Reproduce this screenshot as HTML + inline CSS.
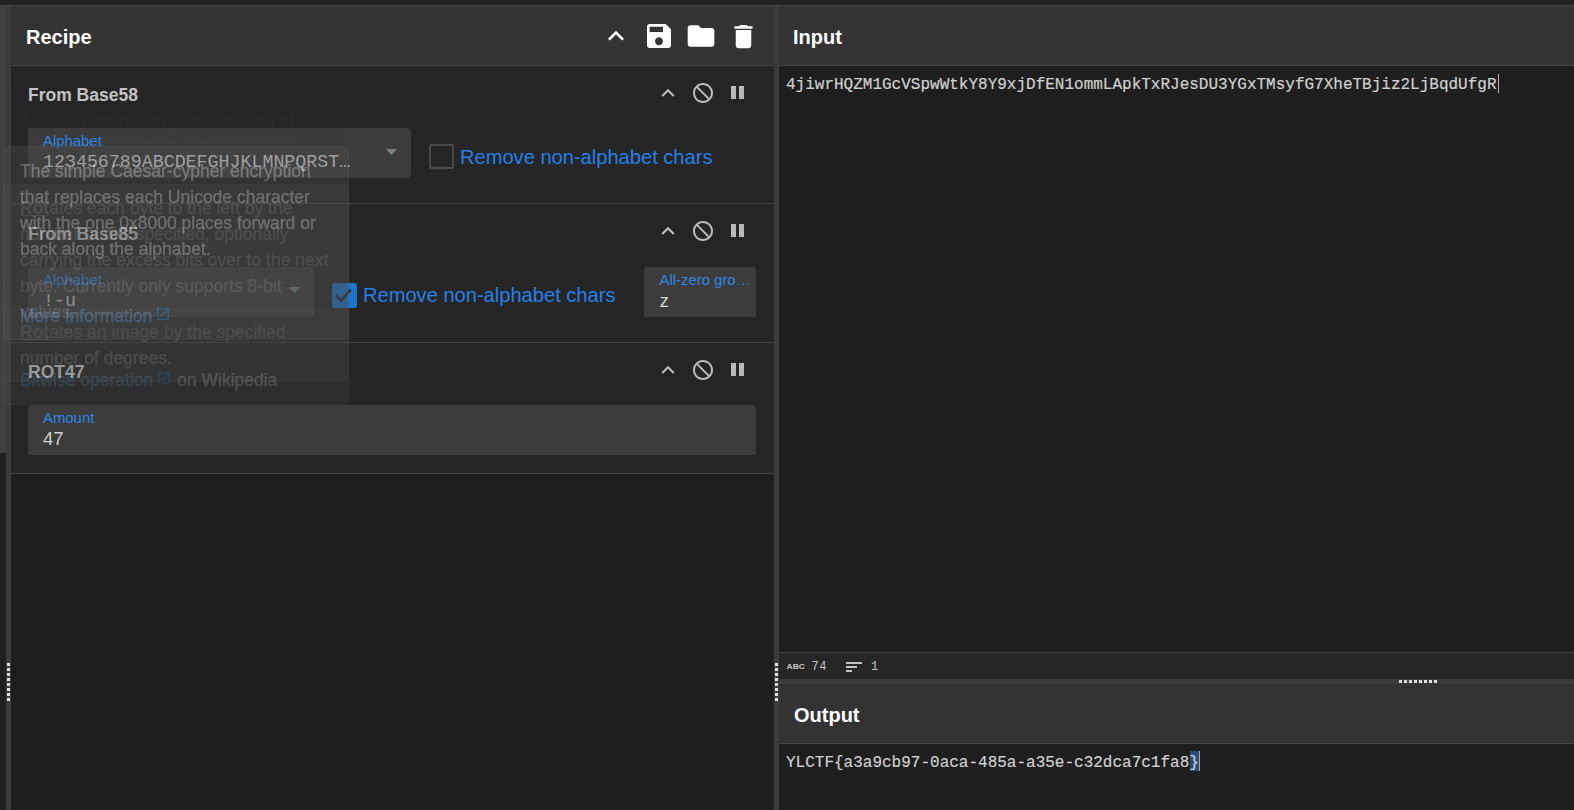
<!DOCTYPE html>
<html><head><meta charset="utf-8">
<style>
*{box-sizing:border-box;margin:0;padding:0}
html,body{width:1574px;height:810px;overflow:hidden;background:#1e1e1e;font-family:"Liberation Sans",sans-serif}
.a{position:absolute}
.hdr{background:#333;border-bottom:1px solid #444}
.title{color:#fff;font-weight:bold;font-size:20px;line-height:20px;white-space:nowrap}
.opt{color:#c5c5c5;font-weight:bold;font-size:17.5px;line-height:18px;white-space:nowrap}
.arg{background:#3c3c3c;border-radius:4px 4px 0 0}
.lbl{color:#2f86e6;font-size:14.9px;line-height:15px;white-space:nowrap}
.mono{font-family:"Liberation Mono",monospace}
.cbl{color:#2680ea;font-size:20.1px;line-height:20px;white-space:nowrap}
.val{color:#d0d0d0;white-space:nowrap}

.pop{will-change:transform;position:absolute;left:3px;width:346px;background:#4e4e4e;border:1px solid #626262;border-radius:6px}
.pl{position:absolute;left:16px;color:#e6e6e6;-webkit-text-stroke:0.25px #e6e6e6;font-size:17.5px;line-height:20px;white-space:nowrap}
.pl b{font-weight:bold}
.pk{color:#3aa2ff}
.ext{display:inline-block;vertical-align:baseline}
</style></head><body>
<!-- top strip -->
<div class="a" style="left:0;top:0;width:1574px;height:5px;background:#232323"></div>
<div class="a" style="left:0;top:5px;width:1574px;height:1px;background:#454545"></div>
<!-- left ops panel sliver -->
<div class="a" style="left:0;top:6px;width:6px;height:447px;background:#404040"></div>
<div class="a" style="left:0;top:453px;width:6px;height:357px;background:#1f1f1f"></div>
<!-- gutter left -->
<div class="a" style="left:6px;top:6px;width:5px;height:804px;background:#3c3c3c"></div>
<!-- recipe panel -->
<div class="a" style="left:11px;top:6px;width:763px;height:804px;background:#1e1e1e"></div>
<div class="a hdr" style="left:11px;top:6px;width:763px;height:60px"></div>
<div class="a title" style="left:26px;top:27px">Recipe</div>

<!-- op 1 -->
<div class="a" style="left:11px;top:66px;width:763px;height:138px;background:#252525;border-bottom:1px solid #444"></div>
<div class="a opt" style="left:28px;top:86px">From Base58</div>
<div class="a arg" style="left:28px;top:128px;width:383px;height:50px;border-radius:0 4px 4px 0"></div>
<div class="a lbl" style="left:43px;top:133.7px">Alphabet</div>
<div class="a val mono" style="left:43px;top:153px;font-size:18.3px;line-height:18px">123456789ABCDEFGHJKLMNPQRST…</div>
<div class="a cb" style="left:429px;top:144px;width:25px;height:25px;border:2px solid #4a4a4a;border-radius:2px"></div>
<div class="a cbl" style="left:460px;top:147px">Remove non-alphabet chars</div>

<!-- op 2 -->
<div class="a" style="left:11px;top:204px;width:763px;height:139px;background:#252525;border-bottom:1px solid #444"></div>
<div class="a opt" style="left:28px;top:225px">From Base85</div>
<div class="a arg" style="left:28px;top:267px;width:286px;height:50px;border-radius:0 4px 4px 0"></div>
<div class="a lbl" style="left:43px;top:272.7px">Alphabet</div>
<div class="a val mono" style="left:43px;top:292.3px;font-size:18.3px;line-height:18px">!-u</div>
<div class="a" style="left:332px;top:283px;width:25px;height:25px;background:#1b74d0;border-radius:3px"></div>
<div class="a cbl" style="left:363px;top:285px">Remove non-alphabet chars</div>
<div class="a arg" style="left:644px;top:267px;width:112px;height:50px"></div>
<div class="a lbl" style="left:659.5px;top:273px">All-zero gro…</div>
<div class="a val" style="left:659.5px;top:291.5px;font-size:19px;line-height:18px">z</div>

<!-- op 3 -->
<div class="a" style="left:11px;top:343px;width:763px;height:131px;background:#252525;border-bottom:1px solid #444"></div>
<div class="a opt" style="left:28px;top:362.5px">ROT47</div>
<div class="a arg" style="left:28px;top:405px;width:728px;height:50px"></div>
<div class="a lbl" style="left:43px;top:410.7px">Amount</div>
<div class="a val" style="left:43px;top:430px;font-size:18.5px;line-height:18px">47</div>


<!-- header icons -->
<svg class="a" style="left:600px;top:20px" width="32" height="32" viewBox="0 0 24 24"><path fill="#fff" d="M7.41 15.41L12 10.83l4.59 4.58L18 14l-6-6-6 6z"/></svg>
<svg class="a" style="left:643px;top:20.3px" width="32" height="32" viewBox="0 0 24 24"><path fill="#fff" d="M17 3H5c-1.11 0-2 .9-2 2v14c0 1.1.89 2 2 2h14c1.1 0 2-.9 2-2V7l-4-4zm-5 16c-1.66 0-3-1.34-3-3s1.34-3 3-3 3 1.34 3 3-1.34 3-3 3zm3-10H5V5h10v4z"/></svg>
<svg class="a" style="left:685.2px;top:20.3px" width="32" height="32" viewBox="0 0 24 24"><path fill="#fff" d="M10 4H4c-1.1 0-1.99.9-1.99 2L2 18c0 1.1.9 2 2 2h16c1.1 0 2-.9 2-2V8c0-1.1-.9-2-2-2h-8l-2-2z"/></svg>
<svg class="a" style="left:728.2px;top:20.7px" width="31" height="31" viewBox="0 0 24 24"><path fill="#fff" d="M6 19c0 1.1.9 2 2 2h8c1.1 0 2-.9 2-2V7H6v12zM19 4h-3.5l-1-1h-5l-1 1H5v2h14V4z"/></svg>
<svg class="a" style="left:654.5px;top:79.8px" width="26" height="26" viewBox="0 0 24 24"><path fill="#bdbdbd" d="M7.41 15.41L12 10.83l4.59 4.58L18 14l-6-6-6 6z"/></svg>
<svg class="a" style="left:690.6px;top:80.8px;transform:scaleX(-1)" width="24" height="24" viewBox="0 0 24 24"><path fill="#bdbdbd" d="M12 2C6.48 2 2 6.48 2 12s4.48 10 10 10 10-4.48 10-10S17.52 2 12 2zM4 12c0-4.42 3.58-8 8-8 1.85 0 3.55.63 4.9 1.69L5.69 16.9C4.63 15.55 4 13.85 4 12zm8 8c-1.85 0-3.55-.63-4.9-1.69L18.31 7.1C19.37 8.45 20 10.15 20 12c0 4.42-3.58 8-8 8z"/></svg>
<div class="a" style="left:731.3px;top:86px;width:4.6px;height:13px;background:#b8b8b8"></div>
<div class="a" style="left:739.3px;top:86px;width:4.6px;height:13px;background:#b8b8b8"></div>
<svg class="a" style="left:654.5px;top:218.3px" width="26" height="26" viewBox="0 0 24 24"><path fill="#bdbdbd" d="M7.41 15.41L12 10.83l4.59 4.58L18 14l-6-6-6 6z"/></svg>
<svg class="a" style="left:690.6px;top:219.3px;transform:scaleX(-1)" width="24" height="24" viewBox="0 0 24 24"><path fill="#bdbdbd" d="M12 2C6.48 2 2 6.48 2 12s4.48 10 10 10 10-4.48 10-10S17.52 2 12 2zM4 12c0-4.42 3.58-8 8-8 1.85 0 3.55.63 4.9 1.69L5.69 16.9C4.63 15.55 4 13.85 4 12zm8 8c-1.85 0-3.55-.63-4.9-1.69L18.31 7.1C19.37 8.45 20 10.15 20 12c0 4.42-3.58 8-8 8z"/></svg>
<div class="a" style="left:731.3px;top:224px;width:4.6px;height:13px;background:#b8b8b8"></div>
<div class="a" style="left:739.3px;top:224px;width:4.6px;height:13px;background:#b8b8b8"></div>
<svg class="a" style="left:654.5px;top:356.8px" width="26" height="26" viewBox="0 0 24 24"><path fill="#bdbdbd" d="M7.41 15.41L12 10.83l4.59 4.58L18 14l-6-6-6 6z"/></svg>
<svg class="a" style="left:690.6px;top:357.8px;transform:scaleX(-1)" width="24" height="24" viewBox="0 0 24 24"><path fill="#bdbdbd" d="M12 2C6.48 2 2 6.48 2 12s4.48 10 10 10 10-4.48 10-10S17.52 2 12 2zM4 12c0-4.42 3.58-8 8-8 1.85 0 3.55.63 4.9 1.69L5.69 16.9C4.63 15.55 4 13.85 4 12zm8 8c-1.85 0-3.55-.63-4.9-1.69L18.31 7.1C19.37 8.45 20 10.15 20 12c0 4.42-3.58 8-8 8z"/></svg>
<div class="a" style="left:731.3px;top:363px;width:4.6px;height:13px;background:#b8b8b8"></div>
<div class="a" style="left:739.3px;top:363px;width:4.6px;height:13px;background:#b8b8b8"></div>
<!-- gutter middle -->
<div class="a" style="left:774px;top:6px;width:5px;height:804px;background:#3c3c3c"></div>

<!-- input panel -->
<div class="a hdr" style="left:779px;top:6px;width:795px;height:60px"></div>
<div class="a title" style="left:793px;top:27px">Input</div>
<div class="a" style="left:779px;top:66px;width:795px;height:586px;background:#1e1e1e"></div>
<div class="a val mono" style="left:786px;top:75.1px;font-size:16px;line-height:18px;transform:scaleY(1.065);transform-origin:0 0;-webkit-text-stroke:0.2px #d0d0d0">4jiwrHQZM1GcVSpwWtkY8Y9xjDfEN1ommLApkTxRJesDU3YGxTMsyfG7XheTBjiz2LjBqdUfgR</div>
<div class="a" style="left:1497.5px;top:74px;width:1px;height:19px;background:#b0b0b0"></div>
<!-- status bar -->
<div class="a" style="left:779px;top:652px;width:795px;height:27px;background:#262626;border-top:1px solid #444"></div>
<div class="a" style="left:779px;top:679px;width:795px;height:5px;background:#3c3c3c"></div>
<!-- output -->
<div class="a hdr" style="left:779px;top:684px;width:795px;height:60px"></div>
<div class="a title" style="left:794px;top:705px">Output</div>
<div class="a" style="left:779px;top:744px;width:795px;height:66px;background:#1e1e1e"></div>
<div class="a" style="left:1190px;top:751px;width:10px;height:19.7px;background:#264f78"></div><div class="a val mono" style="left:786px;top:753.2px;font-size:16px;line-height:18px;transform:scaleY(1.065);transform-origin:0 0;-webkit-text-stroke:0.2px #d0d0d0">YLCTF{a3a9cb97-0aca-485a-a35e-c32dca7c1fa8}</div><div class="a" style="left:1199px;top:751px;width:1px;height:19.7px;background:#a8a8a8"></div>


<!-- carets -->
<svg class="a" style="left:385.5px;top:148.5px" width="11" height="6" viewBox="0 0 11 6"><path fill="#7a8087" d="M0 0h11L5.5 6z"/></svg>
<svg class="a" style="left:288.5px;top:287.2px" width="11" height="6" viewBox="0 0 11 6"><path fill="#7a8087" d="M0 0h11L5.5 6z"/></svg>
<!-- check mark -->
<svg class="a" style="left:332px;top:283px" width="25" height="25" viewBox="0 0 25 25"><path fill="none" stroke="#262626" stroke-width="2.6" d="M3.6 12.2L9.2 17.7L18.6 6.6"/></svg>
<div class="a" style="left:1497.5px;top:74px;width:1px;height:19px;background:#b0b0b0"></div>
<!-- status bar -->
<div class="a" style="left:786.5px;top:663.2px;font-size:8.5px;line-height:9px;font-weight:bold;color:#c5c5c5;letter-spacing:0px;transform:scaleY(0.9);transform-origin:0 0;font-family:'Liberation Sans',sans-serif">ABC</div>
<div class="a mono" style="left:811.5px;top:661.2px;font-size:12px;line-height:12px;color:#c5c5c5;letter-spacing:0.6px">74</div>
<div class="a" style="left:846px;top:662px;width:16px;height:2px;background:#c5c5c5"></div>
<div class="a" style="left:846px;top:666px;width:11px;height:2px;background:#c5c5c5"></div>
<div class="a" style="left:846px;top:670px;width:6px;height:2px;background:#c5c5c5"></div>
<div class="a mono" style="left:871px;top:661.2px;font-size:12px;line-height:12px;color:#c5c5c5">1</div>
<div class="a" style="left:7px;top:663px;width:3px;height:3px;background:#e0e0e0"></div><div class="a" style="left:775px;top:663px;width:3px;height:3px;background:#e0e0e0"></div><div class="a" style="left:1399px;top:680px;width:3px;height:3px;background:#e0e0e0"></div><div class="a" style="left:7px;top:668px;width:3px;height:3px;background:#e0e0e0"></div><div class="a" style="left:775px;top:668px;width:3px;height:3px;background:#e0e0e0"></div><div class="a" style="left:1404px;top:680px;width:3px;height:3px;background:#e0e0e0"></div><div class="a" style="left:7px;top:673px;width:3px;height:3px;background:#e0e0e0"></div><div class="a" style="left:775px;top:673px;width:3px;height:3px;background:#e0e0e0"></div><div class="a" style="left:1409px;top:680px;width:3px;height:3px;background:#e0e0e0"></div><div class="a" style="left:7px;top:678px;width:3px;height:3px;background:#e0e0e0"></div><div class="a" style="left:775px;top:678px;width:3px;height:3px;background:#e0e0e0"></div><div class="a" style="left:1414px;top:680px;width:3px;height:3px;background:#e0e0e0"></div><div class="a" style="left:7px;top:683px;width:3px;height:3px;background:#e0e0e0"></div><div class="a" style="left:775px;top:683px;width:3px;height:3px;background:#e0e0e0"></div><div class="a" style="left:1419px;top:680px;width:3px;height:3px;background:#e0e0e0"></div><div class="a" style="left:7px;top:688px;width:3px;height:3px;background:#e0e0e0"></div><div class="a" style="left:775px;top:688px;width:3px;height:3px;background:#e0e0e0"></div><div class="a" style="left:1424px;top:680px;width:3px;height:3px;background:#e0e0e0"></div><div class="a" style="left:7px;top:693px;width:3px;height:3px;background:#e0e0e0"></div><div class="a" style="left:775px;top:693px;width:3px;height:3px;background:#e0e0e0"></div><div class="a" style="left:1429px;top:680px;width:3px;height:3px;background:#e0e0e0"></div><div class="a" style="left:7px;top:698px;width:3px;height:3px;background:#e0e0e0"></div><div class="a" style="left:775px;top:698px;width:3px;height:3px;background:#e0e0e0"></div><div class="a" style="left:1434px;top:680px;width:3px;height:3px;background:#e0e0e0"></div>
<!-- popovers -->
<div class="pop" style="top:94px;height:195px;width:346px;opacity:0.02"><div class="pl" style="top:14.54px">A slightly more complex variation of a</div><div class="pl" style="top:40.54px">caesar cipher, which includes ASCII</div><div class="pl" style="top:66.54px">characters from 33 '!' to 126 '~'.</div><div class="pl" style="top:92.54px">Default rotation: 47.</div><div class="pl" style="top:160.84px"><span class="pk">ROT13</span><svg width="16" height="16" viewBox="0 0 24 24" style="margin-left:3px;vertical-align:0px"><path fill="#3aa2ff" d="M19 19H5V5h7V3H5c-1.11 0-2 .9-2 2v14c0 1.1.89 2 2 2h14c1.1 0 2-.9 2-2v-7h-2v7zM14 3v2h3.59l-9.83 9.83 1.41 1.41L19 6.41V10h2V3h-7z"/></svg> on Wikipedia</div></div>
<div class="pop" style="top:308px;height:74px;width:346px;opacity:0.2"><div class="pl" style="top:13.24px"><b><u>Rot</u></b>ates an image by the specified</div><div class="pl" style="top:39.24px">number of degrees.</div></div>
<div class="pop" style="top:184px;height:221px;width:346px;opacity:0.22"><div class="pl" style="top:13.44px"><b><u>Rot</u></b>ates each byte to the left by the</div><div class="pl" style="top:39.44px">number of bits specified, optionally</div><div class="pl" style="top:65.44px">carrying the excess bits over to the next</div><div class="pl" style="top:91.44px">byte. Currently only supports 8-bit</div><div class="pl" style="top:117.44px">values.</div><div class="pl" style="top:184.94px"><span class="pk">Bitwise operation</span><svg width="16" height="16" viewBox="0 0 24 24" style="margin-left:3px;vertical-align:0px"><path fill="#3aa2ff" d="M19 19H5V5h7V3H5c-1.11 0-2 .9-2 2v14c0 1.1.89 2 2 2h14c1.1 0 2-.9 2-2v-7h-2v7zM14 3v2h3.59l-9.83 9.83 1.41 1.41L19 6.41V10h2V3h-7z"/></svg> on Wikipedia</div></div>
<div class="pop" style="top:146px;height:194px;width:346px;opacity:0.36"><div class="pl" style="top:13.84px">The simple Caesar-cypher encryption</div><div class="pl" style="top:39.84px">that replaces each Unicode character</div><div class="pl" style="top:65.84px">with the one 0x8000 places forward or</div><div class="pl" style="top:91.84px">back along the alphabet.</div><div class="pl" style="top:159.24px"><span class="pk">More Information</span><svg width="16" height="16" viewBox="0 0 24 24" style="margin-left:3px;vertical-align:0px"><path fill="#3aa2ff" d="M19 19H5V5h7V3H5c-1.11 0-2 .9-2 2v14c0 1.1.89 2 2 2h14c1.1 0 2-.9 2-2v-7h-2v7zM14 3v2h3.59l-9.83 9.83 1.41 1.41L19 6.41V10h2V3h-7z"/></svg></div></div>
</body></html>
